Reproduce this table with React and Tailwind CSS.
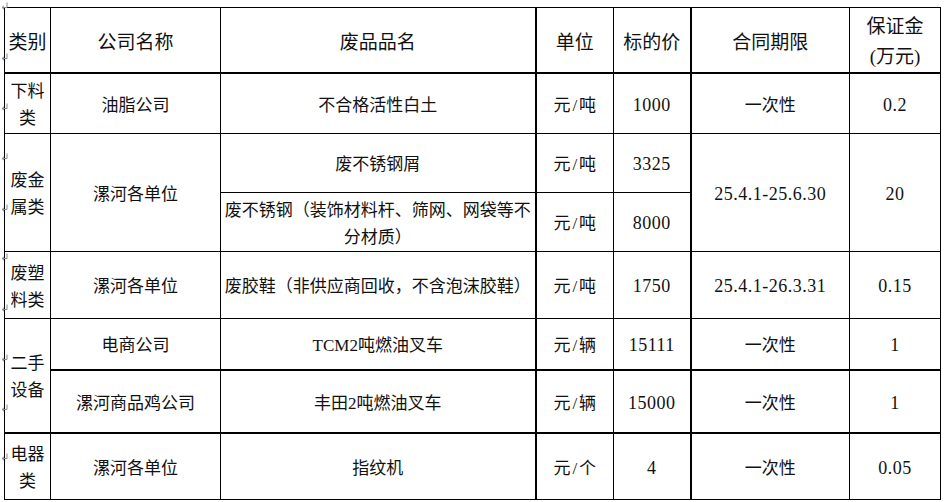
import React from 'react'

const font = { fontFamily: '"Liberation Serif", "Noto Sans CJK SC", serif' }

const td = 'border border-black text-center align-middle p-0 pt-[4px] font-normal text-[17px] leading-[27px]'
const num = 'text-[18px] tracking-[0.5px]'

// Word 段落标记（表格左侧的小回车符）
const marks = [6, 57, 107, 157, 208, 257, 308, 358, 408, 457]

function ReturnMark({ top }) {
  return (
    <svg className="absolute left-[1px]" style={{ top: top - 4 }} width="7" height="8" viewBox="0 0 7 8">
      <path d="M6 0.5 V5.5 H1.5" fill="none" stroke="#8a8a8a" strokeWidth="1" />
      <path d="M3 3.8 L1 5.5 L3 7.2" fill="none" stroke="#8a8a8a" strokeWidth="1" />
    </svg>
  )
}

function Unit({ a, b }) {
  return <>{a}<span className="mx-[2px]">/</span>{b}</>
}

export default function App() {
  return (
    <div className="relative w-[944px] h-[502px] bg-white text-[#111]" style={font}>
      <div className="pt-[7px] pl-[4px]">
        <table className="table-fixed border-collapse w-[936px]">
          <colgroup>
            <col className="w-[46px]" />
            <col className="w-[170px]" />
            <col className="w-[315px]" />
            <col className="w-[78px]" />
            <col className="w-[77px]" />
            <col className="w-[159px]" />
            <col className="w-[91px]" />
          </colgroup>
          <thead>
            <tr className="h-[64px] text-[19px]">
              <th className={`${td} text-[19px] border-b-2`}>类别</th>
              <th className={`${td} text-[19px] border-b-2`}>公司名称</th>
              <th className={`${td} text-[19px] border-b-2`}>废品品名</th>
              <th className={`${td} text-[19px] border-b-2 border-l-2`}>单位</th>
              <th className={`${td} text-[19px] border-b-2`}>标的价</th>
              <th className={`${td} text-[19px] border-b-2 border-l-2`}>合同期限</th>
              <th className={`${td} text-[19px] leading-[30px] border-b-2 pt-0`}>保证金<br />(万元)</th>
            </tr>
          </thead>
          <tbody>
            <tr className="h-[60px]">
              <td className={td}>下料<br />类</td>
              <td className={td}>油脂公司</td>
              <td className={td}>不合格活性白土</td>
              <td className={`${td} border-l-2`}><Unit a="元" b="吨" /></td>
              <td className={`${td} ${num}`}>1000</td>
              <td className={`${td} border-l-2`}>一次性</td>
              <td className={`${td} ${num}`}>0.2</td>
            </tr>
            <tr className="h-[59px]">
              <td rowSpan={2} className={td}>废金<br />属类</td>
              <td rowSpan={2} className={td}>漯河各单位</td>
              <td className={td}>废不锈钢屑</td>
              <td className={`${td} border-l-2`}><Unit a="元" b="吨" /></td>
              <td className={`${td} ${num}`}>3325</td>
              <td rowSpan={2} className={`${td} ${num} border-l-2`}>25.4.1-25.6.30</td>
              <td rowSpan={2} className={`${td} ${num}`}>20</td>
            </tr>
            <tr className="h-[57px]">
              <td className={td}>废不锈钢（装饰材料杆、筛网、网袋等不<br />分材质）</td>
              <td className={`${td} border-l-2`}><Unit a="元" b="吨" /></td>
              <td className={`${td} ${num}`}>8000</td>
            </tr>
            <tr className="h-[67px]">
              <td className={td}>废塑<br />料类</td>
              <td className={td}>漯河各单位</td>
              <td className={td}>废胶鞋（非供应商回收，不含泡沫胶鞋）</td>
              <td className={`${td} border-l-2`}><Unit a="元" b="吨" /></td>
              <td className={`${td} ${num}`}>1750</td>
              <td className={`${td} ${num} border-l-2`}>25.4.1-26.3.31</td>
              <td className={`${td} ${num}`}>0.15</td>
            </tr>
            <tr className="h-[52px]">
              <td rowSpan={2} className={td}>二手<br />设备</td>
              <td className={td}>电商公司</td>
              <td className={td}>TCM2吨燃油叉车</td>
              <td className={`${td} border-l-2`}><Unit a="元" b="辆" /></td>
              <td className={`${td} ${num}`}>15111</td>
              <td className={`${td} border-l-2`}>一次性</td>
              <td className={`${td} ${num}`}>1</td>
            </tr>
            <tr className="h-[63px]">
              <td className={`${td} border-t-2`}>漯河商品鸡公司</td>
              <td className={`${td} border-t-2`}>丰田2吨燃油叉车</td>
              <td className={`${td} border-t-2 border-l-2`}><Unit a="元" b="辆" /></td>
              <td className={`${td} ${num} border-t-2`}>15000</td>
              <td className={`${td} border-t-2 border-l-2`}>一次性</td>
              <td className={`${td} ${num} border-t-2`}>1</td>
            </tr>
            <tr className="h-[66px]">
              <td className={`${td} border-t-2`}>电器<br />类</td>
              <td className={`${td} border-t-2`}>漯河各单位</td>
              <td className={`${td} border-t-2`}>指纹机</td>
              <td className={`${td} border-t-2 border-l-2`}><Unit a="元" b="个" /></td>
              <td className={`${td} ${num} border-t-2`}>4</td>
              <td className={`${td} border-t-2 border-l-2`}>一次性</td>
              <td className={`${td} ${num} border-t-2`}>0.05</td>
            </tr>
          </tbody>
        </table>
      </div>
      {marks.map(y => <ReturnMark key={y} top={y} />)}
    </div>
  )
}
